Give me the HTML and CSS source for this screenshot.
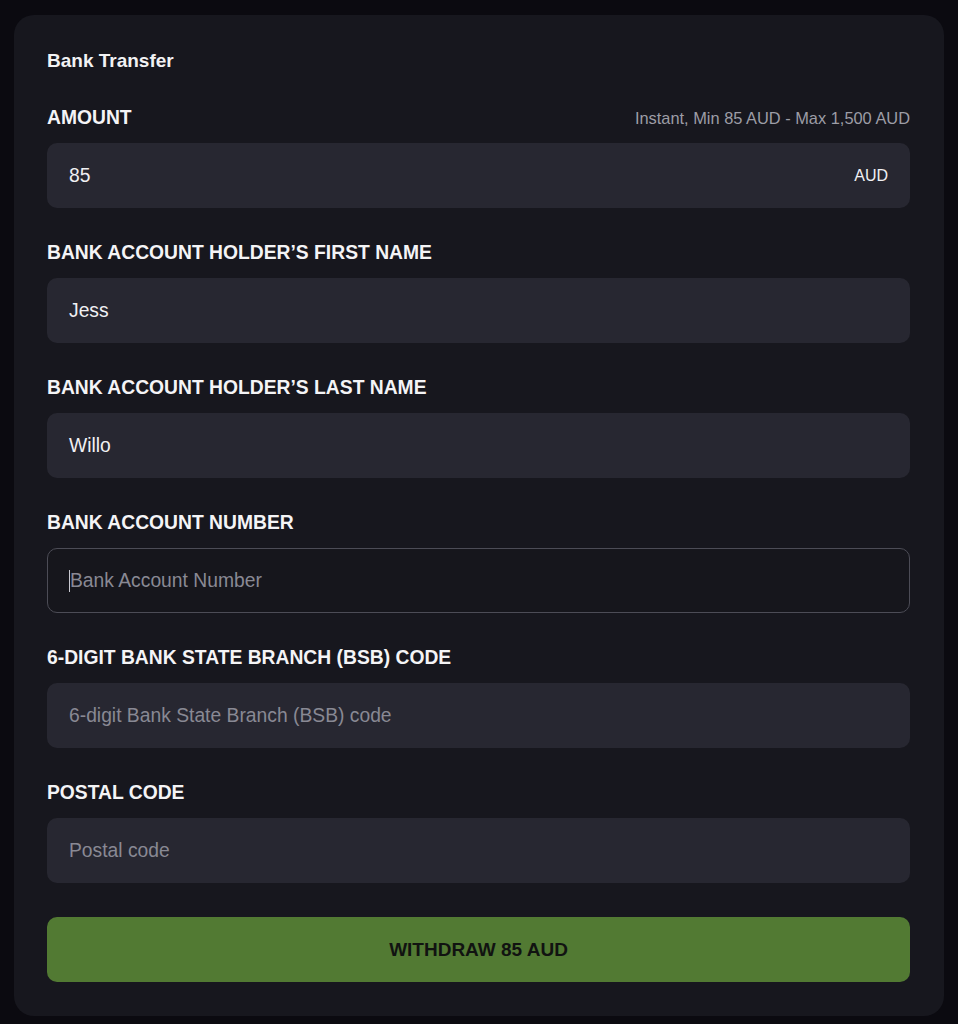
FILE: index.html
```html
<!DOCTYPE html>
<html lang="en">
<head>
<meta charset="utf-8">
<title>Bank Transfer</title>
<link rel="stylesheet" href="styles.css">
</head>
<body>
<div class="card">
  <div class="title">Bank Transfer</div>
  <div class="field">
    <div class="label-row">
      <span class="label">AMOUNT</span>
      <span class="hint">Instant, Min 85 AUD - Max 1,500 AUD</span>
    </div>
    <div class="input"><span class="value">85</span><span class="suffix">AUD</span></div>
  </div>
  <div class="field">
    <div class="label">BANK ACCOUNT HOLDER’S FIRST NAME</div>
    <div class="input"><span class="value">Jess</span></div>
  </div>
  <div class="field">
    <div class="label">BANK ACCOUNT HOLDER’S LAST NAME</div>
    <div class="input"><span class="value">Willo</span></div>
  </div>
  <div class="field">
    <div class="label">BANK ACCOUNT NUMBER</div>
    <div class="input focused"><span class="caret"></span><span class="placeholder">Bank Account Number</span></div>
  </div>
  <div class="field">
    <div class="label">6-DIGIT BANK STATE BRANCH (BSB) CODE</div>
    <div class="input"><span class="placeholder">6-digit Bank State Branch (BSB) code</span></div>
  </div>
  <div class="field">
    <div class="label">POSTAL CODE</div>
    <div class="input"><span class="placeholder">Postal code</span></div>
  </div>
  <button class="submit">WITHDRAW 85 AUD</button>
</div>
</body>
</html>
```
FILE: styles.css
```css
* { box-sizing: border-box; }
html, body { margin: 0; padding: 0; }
body {
  background: #0b0a10;
  font-family: "Liberation Sans", Arial, sans-serif;
  color: #f2f2f4;
  padding: 15px 14px 8px 14px;
}
.card {
  width: 930px;
  background: #17171e;
  border-radius: 20px;
  padding: 36px 34px 34px 33px;
  display: flex;
  flex-direction: column;
}
.title {
  font-size: 19px;
  font-weight: 700;
  line-height: 20px;
  margin-bottom: 36px;
}
.field {
  display: flex;
  flex-direction: column;
  gap: 14px;
  margin-bottom: 34px;
}
.label-row {
  display: flex;
  justify-content: space-between;
  align-items: center;
}
.label {
  font-size: 19.3px;
  font-weight: 700;
  line-height: 22px;
  color: #f4f4f6;
}
.hint {
  font-size: 16.4px;
  color: #9d9da6;
  line-height: 22px;
}
.input {
  height: 65px;
  border-radius: 10px;
  background: #272731;
  display: flex;
  align-items: center;
  justify-content: space-between;
  padding: 0 22px 0 22px;
  font-size: 19.3px;
}
.input.focused {
  background: #16161c;
  border: 1px solid #4c4c56;
  justify-content: flex-start;
  padding-left: 21px;
}
.value { color: #f0f0f3; }
.suffix { font-size: 16px; color: #f0f0f3; }
.placeholder { color: #898994; }
.caret {
  width: 1px;
  height: 22px;
  background: #c8c8d0;
}
.submit {
  height: 65px;
  border: none;
  border-radius: 10px;
  background: #527a33;
  color: #111311;
  font-family: "Liberation Sans", Arial, sans-serif;
  font-weight: 700;
  font-size: 19px;
  cursor: pointer;
}
```
